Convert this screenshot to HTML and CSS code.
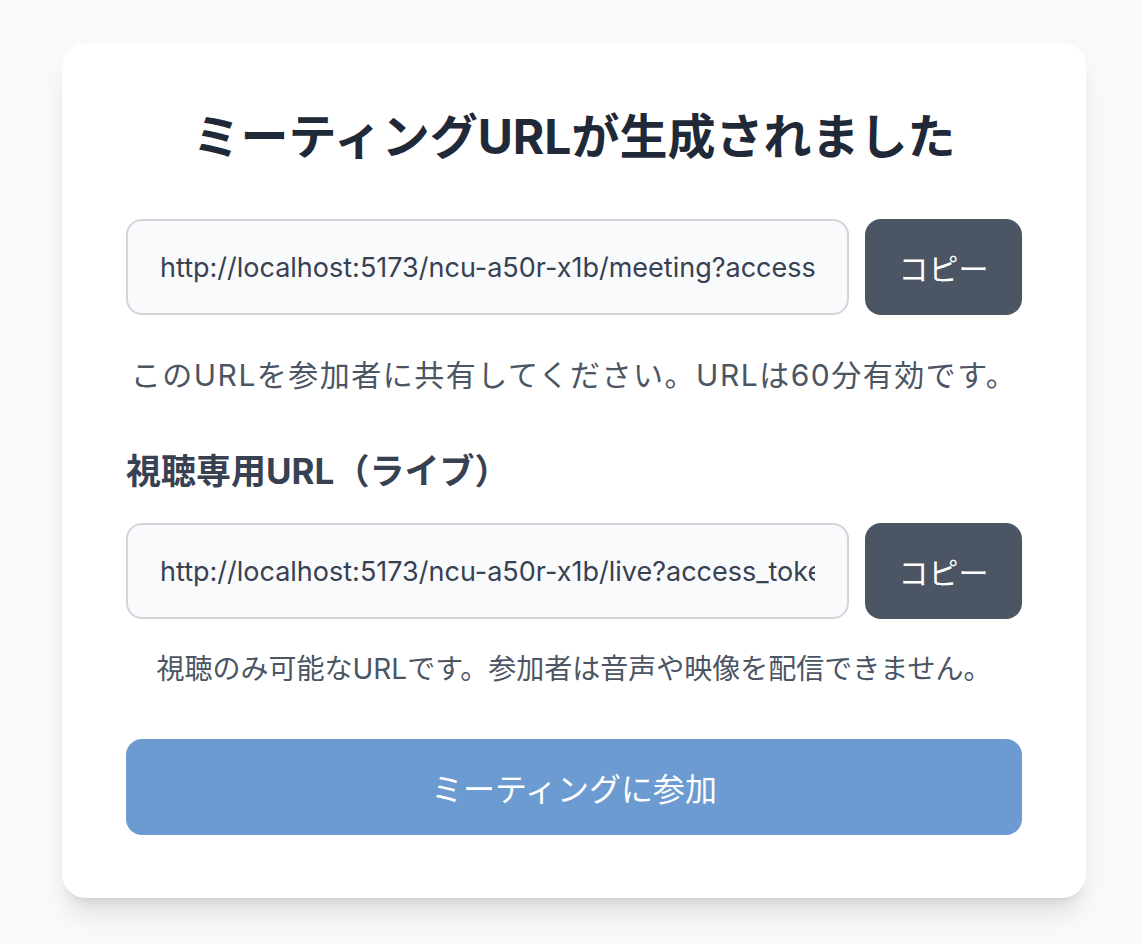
FILE: index.html
```html
<!DOCTYPE html>
<html lang="ja">
<head>
<meta charset="utf-8">
<title>ミーティングURLが生成されました</title>
<link rel="stylesheet" href="styles.css">
</head>
<body>
<main class="card">
  <h1 class="title">ミーティングURLが生成されました</h1>
  <div class="url-row">
    <input class="url-input" type="text" readonly value="http://localhost:5173/ncu-a50r-x1b/meeting?access_token=eyJhbGciOiJIUzI1NiIsInR5cCI6IkpXVCJ9">
    <button class="copy-btn" type="button">コピー</button>
  </div>
  <p class="help help-main">このURLを参加者に共有してください。URLは60分有効です。</p>
  <h2 class="section-title">視聴専用URL（ライブ）</h2>
  <div class="url-row">
    <input class="url-input" type="text" readonly value="http://localhost:5173/ncu-a50r-x1b/live?access_token=eyJhbGciOiJIUzI1NiIsInR5cCI6IkpXVCJ9">
    <button class="copy-btn" type="button">コピー</button>
  </div>
  <p class="help help-live">視聴のみ可能なURLです。参加者は音声や映像を配信できません。</p>
  <button class="join-btn" type="button">ミーティングに参加</button>
</main>
</body>
</html>
```
FILE: styles.css
```css
* { box-sizing: border-box; }
html, body { margin: 0; }
body {
  background: #f8f9fb;
  font-family: Inter, "Noto Sans CJK JP", sans-serif;
  padding: 43px 0 40px 62px;
}
.card {
  width: 1024px;
  background: #ffffff;
  border-radius: 24px;
  padding: 64px 64px 63px;
  box-shadow: 0 20px 25px -5px rgba(0,0,0,0.10), 0 8px 10px -6px rgba(0,0,0,0.10);
  display: flex;
  flex-direction: column;
}
.title {
  margin: 0 0 52px;
  font-size: 48px;
  line-height: 60px;
  font-weight: 700;
  color: #1f2937;
  text-align: center;
}
.url-row {
  display: flex;
  gap: 16px;
  height: 96px;
}
.url-input {
  flex: 1;
  min-width: 0;
  height: 96px;
  border: 2px solid #d1d5db;
  border-radius: 16px;
  background: #f8fafc;
  padding: 0 32px;
  font-family: Inter, "Noto Sans CJK JP", sans-serif;
  font-size: 27px;
  color: #374151;
  outline: none;
}
.copy-btn {
  width: 157px;
  height: 96px;
  border: none;
  border-radius: 16px;
  background: #4b5563;
  color: #ffffff;
  font-family: Inter, "Noto Sans CJK JP", sans-serif;
  font-size: 30px;
  padding: 0;
}
.help {
  margin: 0;
  text-align: center;
  color: #4b5563;
}
.help-main {
  font-size: 30px;
  letter-spacing: 1.5px;
  line-height: 48px;
  margin-top: 36px;
}
.section-title {
  margin: 48px 0 28px;
  font-size: 35px;
  line-height: 48px;
  font-weight: 700;
  color: #374151;
}
.help-live {
  font-size: 28px;
  line-height: 42px;
  margin-top: 29px;
}
.join-btn {
  margin-top: 49px;
  height: 96px;
  border: none;
  border-radius: 16px;
  background: #6b9bd1;
  color: #ffffff;
  font-family: Inter, "Noto Sans CJK JP", sans-serif;
  font-size: 32px;
  padding: 0;
}
```
